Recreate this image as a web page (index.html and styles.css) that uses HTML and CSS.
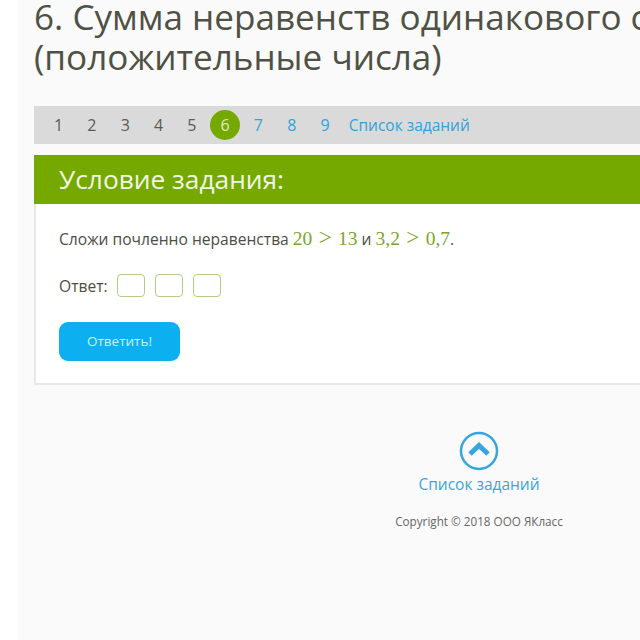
FILE: index.html
```html
<!DOCTYPE html>
<html>
    <head lang="ru">
        <meta charset="UTF-8">
        <title>Сумма неравенств</title>
        <link rel="stylesheet" href="styles.css">
    </head>
    <body>
        <div class="page">
            <h1 class="title">6. Сумма неравенств одинакового смысла (положительные числа)</h1>
            <div class="pager">
                <span class="num">1</span>
                <span class="num">2</span>
                <span class="num">3</span>
                <span class="num">4</span>
                <span class="num">5</span>
                <span class="num current">6</span>
                <a class="num link">7</a>
                <a class="num link">8</a>
                <a class="num link">9</a>
                <a class="list link">Список заданий</a>
            </div>
            <div class="task">
                <div class="task-head">Условие задания:</div>
                <div class="task-body">
                    <p class="cond">Сложи почленно неравенства <span class="math">20 <span class="rel">&gt;</span> 13</span> и <span class="math">3,2 <span class="rel">&gt;</span> 0,7</span>.</p>
                    <div class="answer">
                        <span class="answer-label">Ответ:</span>
                        <span class="box"></span>
                        <span class="box"></span>
                        <span class="box"></span>
                    </div>
                    <div class="btn">Ответить!</div>
                </div>
            </div>
            <div class="foot">
                <svg class="up" width="40" height="40" viewBox="0 0 40 40">
                    <circle cx="20" cy="20" r="18" fill="none" stroke="#3aa5dc" stroke-width="2.5"/>
                    <path d="M11 23 L20 14.500 L29 23" fill="none" stroke="#3aa5dc" stroke-width="5"/>
                </svg>
                <a class="foot-link">Список заданий</a>
                <div class="copy">Copyright © 2018 ООО ЯКласс</div>
            </div>
        </div>
    </body>
</html>
```

FILE: styles.css
```css
*{
    margin:0;
    padding:0;
    box-sizing:border-box;
}
html,body{
    height:100%;
    background:#fff;
    overflow:hidden;
}
body{
    font-family:"Open Sans","Noto Sans",sans-serif;
    color:#4d4d45;
}
.page{
    display:flow-root;
    width:900px;
    height:640px;
    margin-left:18px;
    padding-left:16px;
    background:#fafafa;
}
.title{
    width:866px;
    font-size:35.100px;
    font-weight:400;
    line-height:40px;
    height:110px;
    margin-top:-4px;
    color:#4f5145;
}
.pager{
    display:flex;
    align-items:center;
    height:38px;
    padding-left:8px;
    background:#dadada;
    font-size:16px;
    color:#5c5c55;
}
.num{
    width:33.300px;
    height:30px;
    line-height:30px;
    text-align:center;
}
.current{
    width:30px;
    margin:0 1.650px;
    border-radius:50%;
    background:#76a900;
    color:#dfe8c8;
}
.link{
    color:#2ea3dc;
}
.list{
    margin-left:7px;
    font-size:15.500px;
}
.task{
    margin-top:11px;
    border:2px solid #e8e8e8;
    border-top:0;
    background:#fff;
}
.task-head{
    height:49px;
    margin:0 -2px;
    padding-left:25px;
    background:#76a900;
    color:#f1f5e4;
    font-size:26.300px;
    line-height:49px;
}
.task-body{
    height:179px;
    padding:22px 23px 0;
}
.cond{
    font-size:15.600px;
    line-height:26px;
}
.math{
    color:#7aa52a;
    font-family:"Liberation Serif",serif;
    font-size:19.500px;
    line-height:1;
    word-spacing:1.500px;
}
.rel{
    font-size:23px;
    line-height:1;
}
.answer{
    display:flex;
    align-items:center;
    gap:10px;
    margin-top:22px;
    font-size:15.600px;
}
.answer-label{
    margin-right:-1px;
}
.box{
    width:28px;
    height:23px;
    border:1.500px solid #b5cc85;
    border-radius:4px;
}
.btn{
    width:121px;
    height:39px;
    margin-top:25px;
    border-radius:9px;
    background:#0cb0f0;
    color:#cdf1fd;
    font-size:13.500px;
    line-height:39px;
    text-align:center;
}
.foot{
    width:340px;
    margin:46px 0 0 275px;
    text-align:center;
}
.up{
    display:block;
    margin:0 auto;
}
.foot-link{
    display:block;
    margin-top:2px;
    color:#3aa5dc;
    font-size:15.500px;
    line-height:22px;
}
.copy{
    margin-top:18px;
    font-size:11.700px;
    line-height:16px;
    color:#666;
}
```
